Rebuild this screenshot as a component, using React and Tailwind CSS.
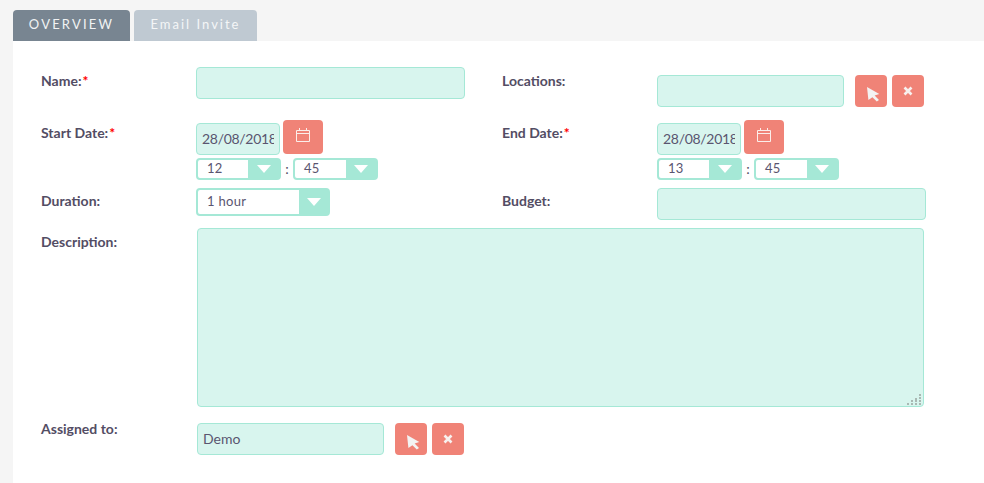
const inputCls =
  'block h-8 rounded-[4px] border border-[#a5e8d6] bg-[#d8f5ee] pb-[2px] text-[14px] text-[#5a5570] outline-none';

function Label({ text, required, className = '' }) {
  return (
    <div className={`w-[155px] shrink-0 text-[14px] font-bold leading-[20px] text-[#534d64] ${className}`}>
      {text}
      {required && <span className="ml-[1px] text-[#ff0000]">*</span>}
    </div>
  );
}

function CursorIcon() {
  return (
    <svg width="32" height="32" viewBox="0 0 32 32">
      <path d="M12 12 24.3 19 19.6 20.6 24 25 21.8 26.6 17.4 22.2 13.4 25Z" fill="#f3f3f3" />
    </svg>
  );
}

function CrossIcon() {
  return (
    <svg width="10" height="10" viewBox="0 0 10 10" className="-mt-[1px]">
      <path d="M1.5 1.5 8.5 8.5M8.5 1.5 1.5 8.5" stroke="#f7f1ef" strokeWidth="2.6" />
    </svg>
  );
}

function CalendarIcon() {
  return (
    <svg width="14" height="14" viewBox="0 0 14 14" fill="none" stroke="#fbeeea" strokeWidth="1" className="-mt-[5px]">
      <path d="M.5 2.5h13v11H.5zM.5 5.5h13M3.5 0v3M10.5 0v3" />
    </svg>
  );
}

function IconButton({ children }) {
  return (
    <button className="flex h-8 w-8 items-center justify-center rounded-[4px] bg-[#f08377]">
      {children}
    </button>
  );
}

function Select({ value, width, height, arrow, textPad }) {
  return (
    <div
      className="flex shrink-0 rounded-[4px] border-2 border-[#a5e8d6] bg-white text-[13px] tracking-[0.3px] text-[#5a5570]"
      style={{ width, height }}
    >
      <div className="flex-1" style={{ paddingLeft: textPad, lineHeight: `${height - 5}px` }}>
        {value}
      </div>
      <div className="flex items-center justify-center bg-[#a5e8d6]" style={{ width: arrow }}>
        <div className="h-0 w-0 border-x-[7px] border-t-[8px] border-x-transparent border-t-white" />
      </div>
    </div>
  );
}

function DateTime({ hour }) {
  return (
    <div className="w-[185px]">
      <div className="flex items-start">
        <input
          readOnly
          value="28/08/2018"
          className={`${inputCls} mt-[3px] w-[84px] px-[5px] tracking-[-0.3px]`}
        />
        <button className="ml-[3px] flex h-[34px] w-10 items-center justify-center rounded-[4px] bg-[#f08377]">
          <CalendarIcon />
        </button>
      </div>
      <div className="mt-[3px] flex items-center">
        <Select value={hour} width={85} height={22} arrow={31} textPad={9} />
        <span className="w-3 text-center text-[14px] leading-[22px] text-[#534d64]">:</span>
        <Select value="45" width={85} height={22} arrow={30} textPad={9} />
      </div>
    </div>
  );
}

export default function App() {
  return (
    <div className="h-[483px] overflow-hidden bg-[#f5f5f5] pt-[10px] pl-[13px] font-['Lato',sans-serif]">
      <div className="flex h-[31px] items-stretch gap-[4px]">
        <div className="flex w-[117px] items-center justify-center rounded-t-[4px] bg-[#788591] pb-[2px] text-[13px] tracking-[2.2px] text-[#f1f3f4]">
          OVERVIEW
        </div>
        <div className="flex w-[123px] items-center justify-center rounded-t-[4px] bg-[#bfc9d2] pb-[2px] text-[13px] tracking-[2px] text-[#f4f6f7]">
          Email Invite
        </div>
      </div>

      <div className="h-[442px] bg-white pt-[26px] pl-[28px]">
        <div className="flex h-[53px]">
          <div className="flex w-[461px]">
            <Label text="Name:" required className="mt-[4px]" />
            <input readOnly className={`${inputCls} w-[269px]`} />
          </div>
          <div className="flex">
            <Label text="Locations:" className="mt-[4px]" />
            <div className="mt-[8px] flex">
              <input readOnly className={`${inputCls} w-[187px]`} />
              <div className="ml-[11px] flex gap-[5px]">
                <IconButton><CursorIcon /></IconButton>
                <IconButton><CrossIcon /></IconButton>
              </div>
            </div>
          </div>
        </div>

        <div className="flex h-[68px]">
          <div className="flex w-[461px]">
            <Label text="Start Date:" required className="mt-[3px]" />
            <DateTime hour="12" />
          </div>
          <div className="flex">
            <Label text="End Date:" required className="mt-[3px]" />
            <DateTime hour="13" />
          </div>
        </div>

        <div className="flex h-[40px]">
          <div className="flex w-[461px]">
            <Label text="Duration:" className="mt-[3px]" />
            <Select value="1 hour" width={134} height={28} arrow={29} textPad={9} />
          </div>
          <div className="flex">
            <Label text="Budget:" className="mt-[3px]" />
            <input readOnly className={`${inputCls} w-[269px]`} />
          </div>
        </div>

        <div className="flex h-[195px]">
          <Label text="Description:" className="mt-[4px]" />
          <div className="relative ml-[1px] h-[179px] w-[727px]">
            <textarea readOnly className={`${inputCls} !h-full w-full resize-none`} />
            <svg width="16" height="12" viewBox="0 0 16 12" fill="#a9b8b3" className="absolute right-[1px] bottom-[1px]">
              <path d="M0 9h2v2H0zM4 9h2v2H4zM8 9h2v2H8zM12 9h2v2h-2zM4 6h2v2H4zM8 6h2v2H8zM12 6h2v2h-2zM8 4h2v2H8zM12 3h2v2h-2zM12 0h2v2h-2z" />
            </svg>
          </div>
        </div>

        <div className="flex">
          <Label text="Assigned to:" className="mt-[-4px]" />
          <input readOnly value="Demo" className={`${inputCls} ml-[1px] w-[187px] px-[5px]`} />
          <div className="ml-[11px] flex gap-[5px]">
            <IconButton><CursorIcon /></IconButton>
            <IconButton><CrossIcon /></IconButton>
          </div>
        </div>
      </div>
    </div>
  );
}
